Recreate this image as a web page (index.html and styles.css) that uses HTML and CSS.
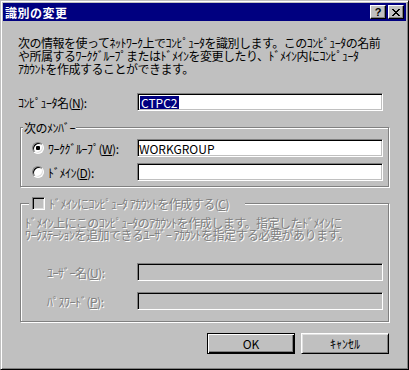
FILE: index.html
```html
<!doctype html>
<html>
<head>
<meta charset="utf-8">
<title>識別の変更</title>
<link rel="stylesheet" href="styles.css">
</head>

<body>
	<div class="window">
		<div class="titlebar">
			<span class="title">識別の変更</span>
			<div class="caption-buttons">
				<span class="cap-btn help">?</span>
				<span class="cap-btn close">
					<svg width="8" height="7" viewBox="0 0 8 7" shape-rendering="crispEdges">
						<path d="M0 0h2v1H0zM6 0h2v1H6zM1 1h2v1H1zM5 1h2v1H5zM2 2h4v1H2zM3 3h2v1H3zM2 4h4v1H2zM1 5h2v1H1zM5 5h2v1H5zM0 6h2v1H0zM6 6h2v1H6z" fill="#000"/>
					</svg>
				</span>
			</div>
		</div>

		<div class="client">
			<p class="intro">次の情報を使ってﾈｯﾄﾜｰｸ上でｺﾝﾋﾟｭｰﾀを識別します。このｺﾝﾋﾟｭｰﾀの名前<br>や所属するﾜｰｸｸﾞﾙｰﾌﾟまたはﾄﾞﾒｲﾝを変更したり、ﾄﾞﾒｲﾝ内にｺﾝﾋﾟｭｰﾀ<br>ｱｶｳﾝﾄを作成することができます。</p>

			<div class="name-row">
				<label>ｺﾝﾋﾟｭｰﾀ名(<u>N</u>):</label>
				<div class="edit"><span class="sel">CTPC2</span></div>
			</div>

			<div class="group member">
				<div class="legend">次のﾒﾝﾊﾞｰ</div>
				<div class="opt-row first">
					<label class="opt"><span class="radio checked"></span><span>ﾜｰｸｸﾞﾙｰﾌﾟ(<u>W</u>):</span></label>
					<div class="edit">WORKGROUP</div>
				</div>
				<div class="opt-row">
					<label class="opt"><span class="radio"></span><span>ﾄﾞﾒｲﾝ(<u>D</u>):</span></label>
					<div class="edit"></div>
				</div>
			</div>

			<div class="group account">
				<div class="legend check-legend"><span class="check"></span><span class="off">ﾄﾞﾒｲﾝにｺﾝﾋﾟｭｰﾀ ｱｶｳﾝﾄを作成する(<u>C</u>)</span></div>
				<p class="note off">ﾄﾞﾒｲﾝ上にこのｺﾝﾋﾟｭｰﾀのｱｶｳﾝﾄを作成します。指定したﾄﾞﾒｲﾝに<br>ﾜｰｸｽﾃｰｼｮﾝを追加できるﾕｰｻﾞｰ ｱｶｳﾝﾄを指定する必要があります。</p>
				<div class="opt-row user">
					<label class="off">ﾕｰｻﾞｰ名(<u>U</u>):</label>
					<div class="edit disabled"></div>
				</div>
				<div class="opt-row pass">
					<label class="off">ﾊﾟｽﾜｰﾄﾞ(<u>P</u>):</label>
					<div class="edit disabled"></div>
				</div>
			</div>

			<div class="buttons">
				<button class="btn default">OK</button>
				<button class="btn">ｷｬﾝｾﾙ</button>
			</div>
		</div>
	</div>
</body>

</html>
```

FILE: styles.css
```css
body{
	margin: 0;
	font: 12px/13px "Noto Sans CJK JP", sans-serif;
	color: #000;
}
.window{
	width: 409px;
	height: 370px;
	box-sizing: border-box;
	background: #c0c0c0;
	border: 1px solid;
	border-color: #c0c0c0 #000 #000 #c0c0c0;
	padding: 2px;
	box-shadow: inset 1px 1px #fff, inset -1px -1px #808080;
	display: flex;
	flex-direction: column;
	letter-spacing: -0.5px;
}
/* タイトルバー */
.titlebar{
	height: 18px;
	background: #000080;
	color: #fff;
	display: flex;
	align-items: center;
	padding: 0 2px;
	margin-bottom: 1px;
}
.title{
	flex: 1;
	font-weight: bold;
	letter-spacing: 0.5px;
}
.caption-buttons{
	display: flex;
	gap: 2px;
}
.cap-btn{
	width: 16px;
	height: 14px;
	box-sizing: border-box;
	background: #c0c0c0;
	border: 1px solid;
	border-color: #fff #000 #000 #fff;
	box-shadow: inset -1px -1px #808080;
	display: flex;
	align-items: center;
	justify-content: center;
	color: #000;
}
.help{
	font: bold 11px/1 "Liberation Sans", sans-serif;
	letter-spacing: 0;
}
/* 本体 */
.client{
	flex: 1;
	display: flex;
	flex-direction: column;
	padding: 0 17px 0 15px;
}
.intro{
	margin: 14px 0 0;
}
.name-row{
	display: grid;
	grid-template-columns: 119px 246px;
	align-items: center;
	margin-top: 18px;
}
.edit{
	height: 18px;
	box-sizing: border-box;
	background: #fff;
	border: 1px solid;
	border-color: #808080 #fff #fff #808080;
	box-shadow: inset 1px 1px #000, inset -1px -1px #c0c0c0;
	padding: 0 1px;
	display: flex;
	align-items: center;
	letter-spacing: 0;
}
.edit.disabled{
	background: #c0c0c0;
}
.sel{
	background: #000080;
	color: #fff;
	padding: 0 1px;
	margin-left: 1px;
}
.group{
	margin-left: 2px;
	border: 1px solid #808080;
	box-shadow: 1px 1px #fff, inset 1px 1px #fff;
	display: flex;
	flex-direction: column;
}
.member{
	margin-top: 16px;
	padding-bottom: 5px;
}
.account{
	margin-top: 16px;
	padding-bottom: 11px;
}
.legend{
	align-self: flex-start;
	margin: -7px 0 0 2px;
	padding: 0 1px;
	background: #c0c0c0;
}
.check-legend{
	display: flex;
	align-items: center;
	gap: 4px;
	margin-left: 8px;
	padding: 0 16px 0 3px;
}
.opt-row{
	display: grid;
	grid-template-columns: 116px 246px;
	align-items: center;
	margin-top: 6px;
}
.opt-row.first{
	margin-top: 5px;
}
.opt{
	display: flex;
	align-items: center;
	gap: 4px;
	padding-left: 11px;
}
.radio{
	width: 12px;
	height: 12px;
	box-sizing: border-box;
	border-radius: 50%;
	border: 1px solid;
	border-color: #808080 #fff #fff #808080;
	box-shadow: inset 1px 1px #000, inset -1px -1px #dfdfdf;
	background: #fff;
	display: flex;
	align-items: center;
	justify-content: center;
}
.radio.checked::after{
	content: '';
	width: 4px;
	height: 4px;
	border-radius: 1px;
	background: #000;
}
.check{
	width: 13px;
	height: 13px;
	box-sizing: border-box;
	border: 1px solid;
	border-color: #808080 #fff #fff #808080;
	box-shadow: inset 1px 1px #000, inset -1px -1px #dfdfdf;
	background: #c0c0c0;
}
.off{
	color: #808080;
	text-shadow: 1px 1px 0 #fff;
}
.note{
	margin: 7px 0 0;
	padding-left: 4px;
	line-height: 12px;
}
.user{
	margin-top: 22px;
}
.pass{
	margin-top: 11px;
}
.user label,
.pass label{
	padding-left: 26px;
}
.buttons{
	display: flex;
	justify-content: flex-end;
	gap: 6px;
	margin-top: 11px;
}
.btn{
	width: 88px;
	height: 21px;
	box-sizing: border-box;
	padding: 0;
	font: inherit;
	color: #000;
	background: #c0c0c0;
	border: 1px solid;
	border-color: #fff #000 #000 #fff;
	box-shadow: inset 1px 1px #dfdfdf, inset -1px -1px #808080;
}
.btn.default{
	border-color: #000;
	box-shadow: inset 1px 1px #fff, inset -1px -1px #000, inset -2px -2px #808080;
}
```
